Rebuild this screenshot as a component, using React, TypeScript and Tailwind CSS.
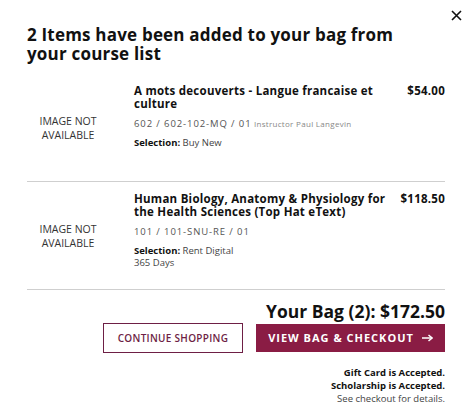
import React from "react";

const font = { fontFamily: '"Open Sans", "Noto Sans", sans-serif' };

function Item({
  title,
  price,
  code,
  instructor,
  selection,
  extra,
}: {
  title: string;
  price: string;
  code: string;
  instructor?: string;
  selection: string;
  extra?: string;
}) {
  return (
    <div className="flex min-h-[108px] border-b border-[#cfcfcf]">
      <div className="w-[82px] flex items-center justify-center text-center text-[10.5px] leading-[14px] text-[#333]">
        IMAGE NOT
        <br />
        AVAILABLE
      </div>
      <div className="flex-1 ml-[25px] pt-[10px] pb-[16px]">
        <div className="flex justify-between">
          <div className="w-[258px] font-bold text-[11.5px] leading-[13px] tracking-[0.25px] text-[#111]">
            {title}
          </div>
          <div className="font-bold text-[11.5px] leading-[13px] tracking-[0.25px] text-[#111]">{price}</div>
        </div>
        <div className="mt-[8px] text-[9.5px] leading-[12px] tracking-[0.9px] text-[#555]">
          {code}
          {instructor && (
            <span className="text-[8px] tracking-[0.3px] text-[#888]"> {instructor}</span>
          )}
        </div>
        <div className="mt-[7px] text-[9.5px] leading-[12px] text-[#444]">
          <span className="font-bold text-[#111]">Selection:</span> {selection}
        </div>
        {extra && <div className="text-[9.5px] leading-[12px] text-[#444]">{extra}</div>}
      </div>
    </div>
  );
}

export default function App() {
  return (
    <div className="relative w-[473px] h-[417px] bg-white overflow-hidden" style={font}>
      <button className="absolute top-[7px] right-[9px] w-[16px] h-[16px] flex items-center justify-center text-[#111]">
        <svg width="11" height="11" viewBox="0 0 11 11">
          <path d="M1 1L10 10M10 1L1 10" stroke="#111" strokeWidth="1.6" />
        </svg>
      </button>
      <div className="pl-[27px] pr-[28px] pt-[25px]">
        <h1 className="font-bold text-[17px] leading-[19px] tracking-[0.2px] text-[#111] pr-[40px]">
          2 Items have been added to your bag from your course list
        </h1>
        <div className="mt-[11px]">
          <Item
            title="A mots decouverts - Langue francaise et culture"
            price="$54.00"
            code="602 / 602-102-MQ / 01"
            instructor="Instructor Paul Langevin"
            selection="Buy New"
          />
          <Item
            title="Human Biology, Anatomy & Physiology for the Health Sciences (Top Hat eText)"
            price="$118.50"
            code="101 / 101-SNU-RE / 01"
            selection="Rent Digital"
            extra="365 Days"
          />
        </div>
        <div className="mt-[10px] text-right font-bold text-[17.5px] leading-[22px] text-[#111]">
          Your Bag (2): $172.50
        </div>
        <div className="mt-[1px] flex justify-end gap-[13px]">
          <button className="w-[140px] h-[30px] border border-[#6e1f45] text-[#6e1f45] text-[10px] tracking-[0.3px] font-semibold">
            CONTINUE SHOPPING
          </button>
          <button className="w-[189px] h-[28px] mt-[1px] bg-[#8a1c44] text-white text-[11px] font-bold tracking-[1px] flex items-center justify-center gap-[8px]">
            VIEW BAG &amp; CHECKOUT
            <svg width="11" height="8" viewBox="0 0 11 8">
              <path d="M0 4H9" stroke="white" strokeWidth="1.5" />
              <path d="M6.5 1L10 4L6.5 7" stroke="white" strokeWidth="1.5" fill="none" />
            </svg>
          </button>
        </div>
        <div className="mt-[13px] text-right text-[9.5px] leading-[13px] text-[#111]">
          <div className="font-bold">Gift Card is Accepted.</div>
          <div className="font-bold">Scholarship is Accepted.</div>
          <div className="text-[#444]">See checkout for details.</div>
        </div>
      </div>
    </div>
  );
}
